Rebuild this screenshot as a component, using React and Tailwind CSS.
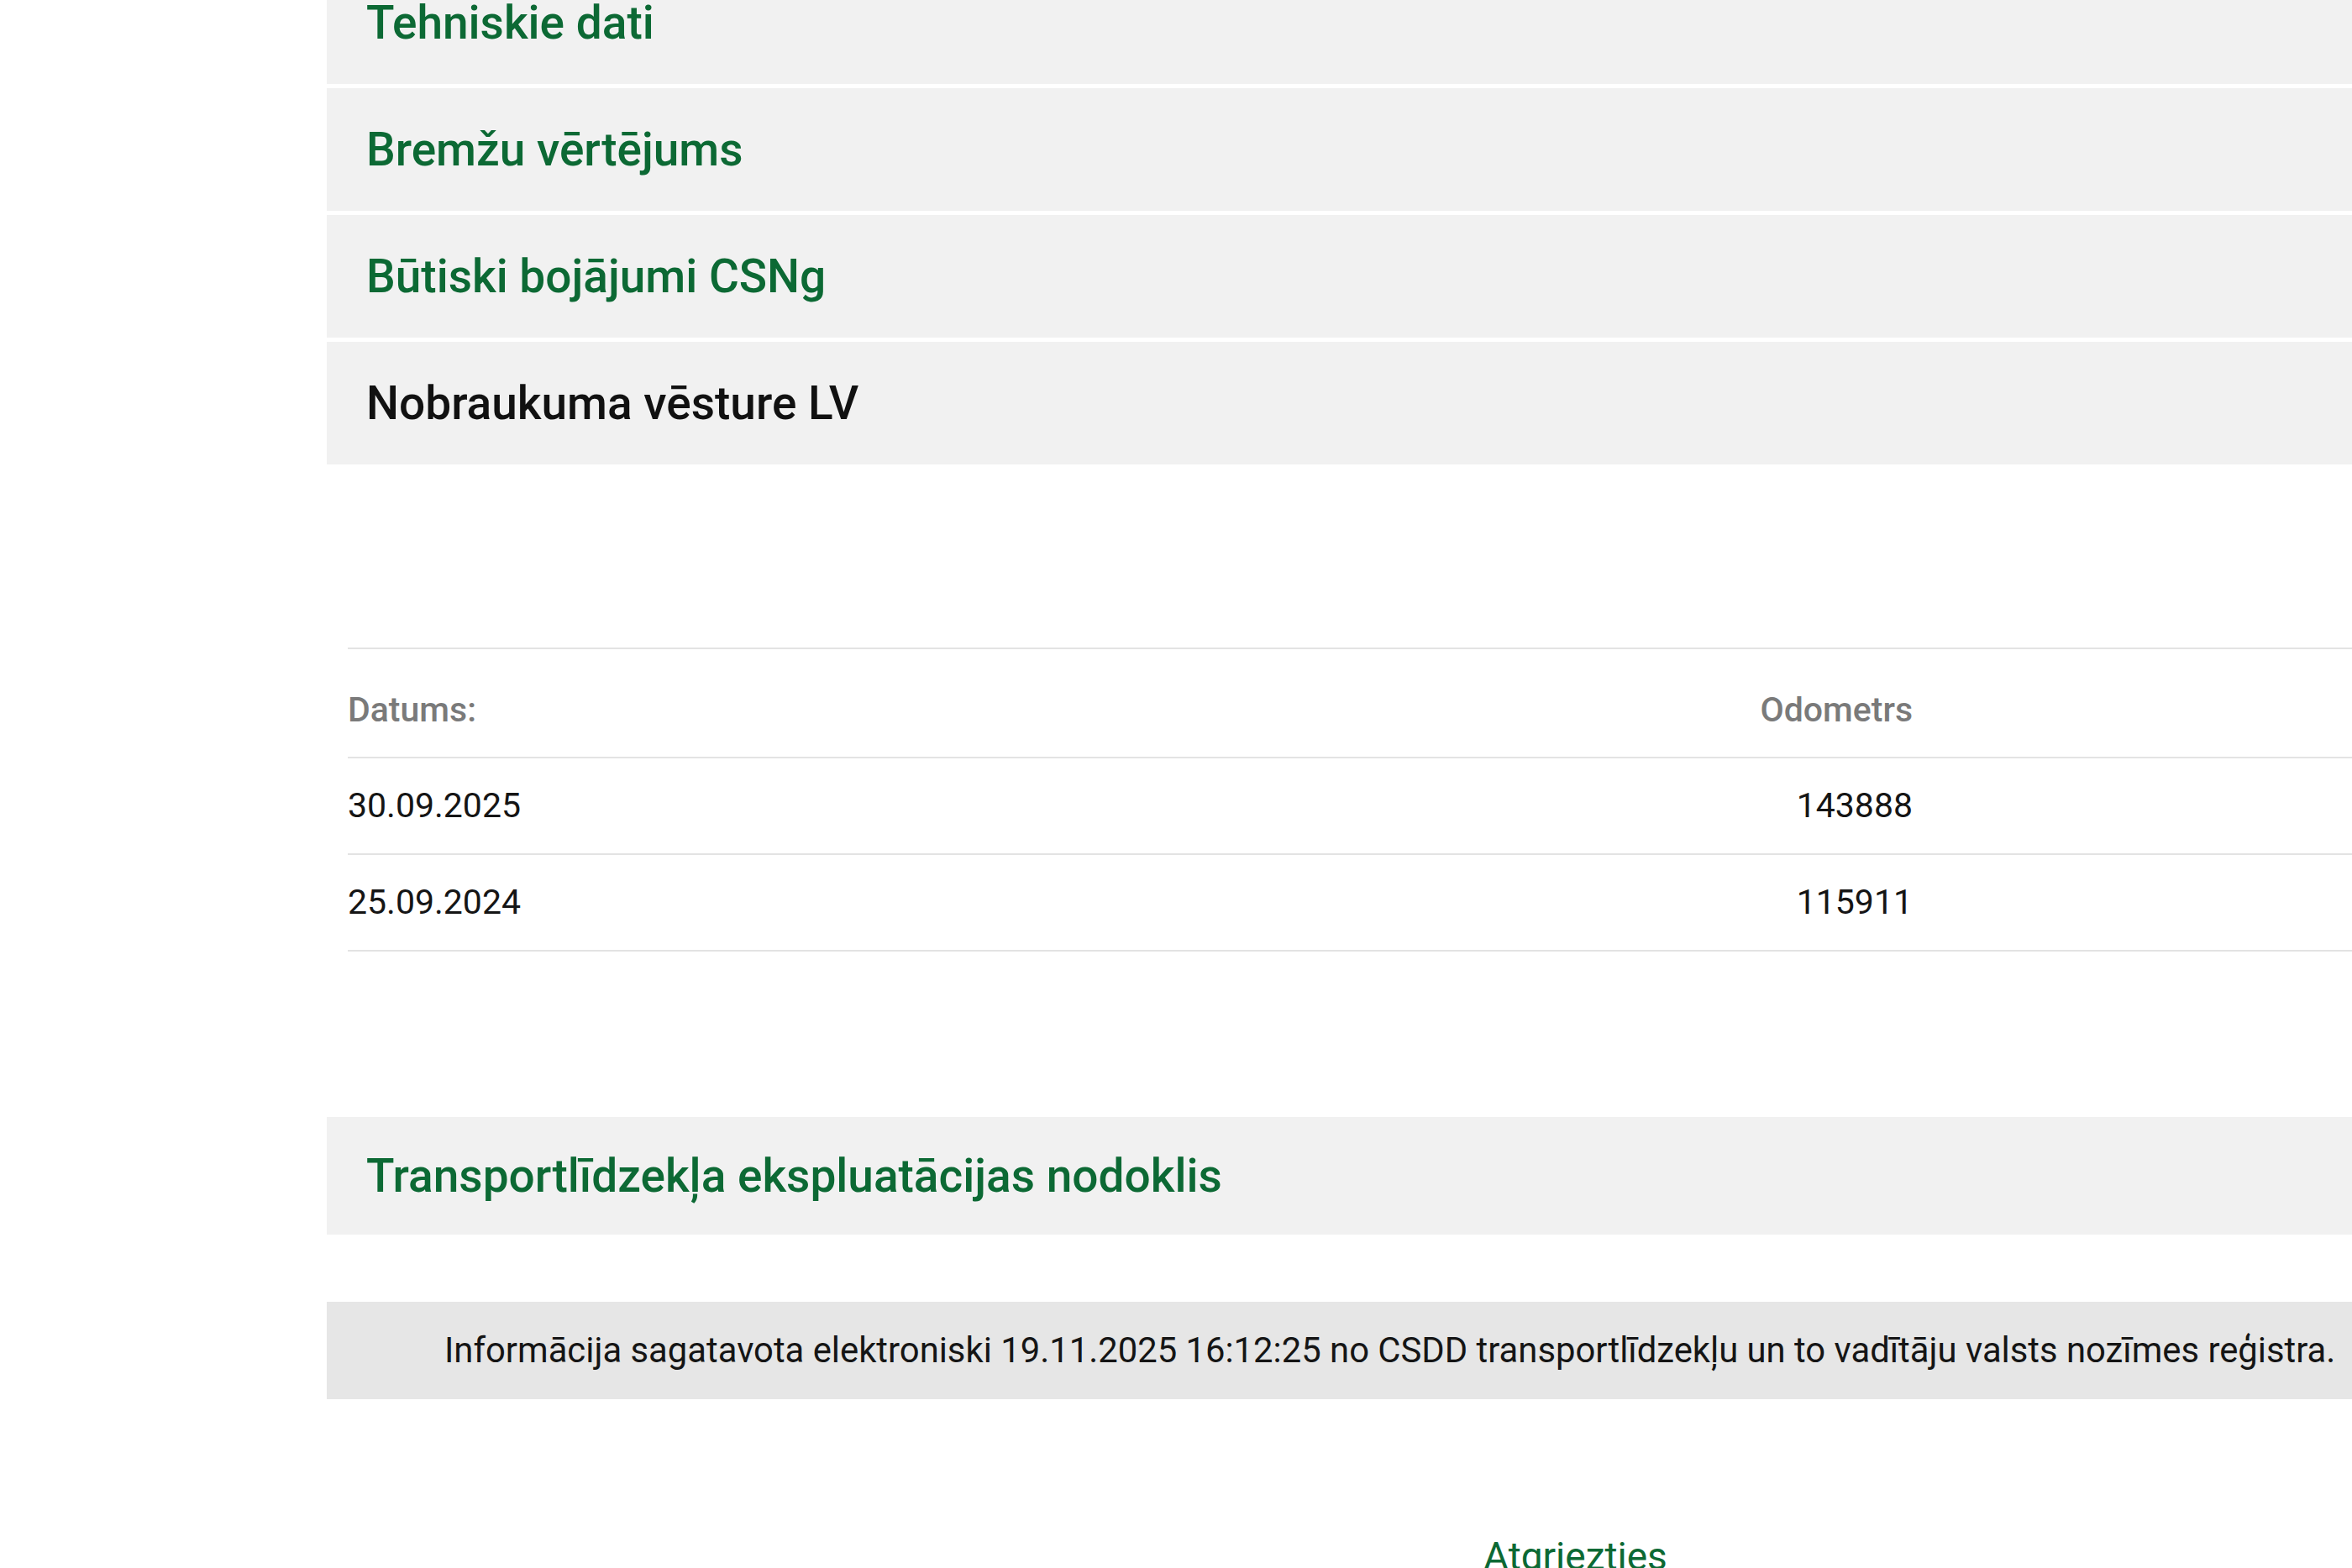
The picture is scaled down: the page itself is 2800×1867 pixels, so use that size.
import React from 'react';

const sections = ['Tehniskie dati', 'Bremžu vērtējums', 'Būtiski bojājumi CSNg'];

const mileage = [
  { date: '30.09.2025', odo: '143888' },
  { date: '25.09.2024', odo: '115911' },
];

const Panel = ({ title, active = false, className = 'h-[146px]' }) => (
  <div className={`flex items-center bg-[#f1f1f1] pl-[47px] ${className}`}>
    <span
      className={`text-[55px] font-medium leading-none ${
        active ? 'text-[#111111]' : 'text-[#0c6934]'
      }`}
    >
      {title}
    </span>
  </div>
);

const App = () => {
  return (
    <div
      className="h-[1867px] w-[2800px] overflow-hidden bg-white"
      style={{ fontFamily: 'Roboto, "Liberation Sans", Arial, sans-serif' }}
    >
      <div className="-mt-[46px] ml-[389px] w-[2600px]">
        {/* Accordion headers */}
        <div className="flex flex-col gap-[5px]">
          {sections.map((title) => (
            <Panel key={title} title={title} />
          ))}
          <Panel title="Nobraukuma vēsture LV" active />
        </div>

        {/* Mileage table */}
        <div className="ml-[25px] mt-[218px] border-t-2 border-[#e3e3e3]">
          <div className="flex h-[130px] items-center border-b-2 border-[#e3e3e3] pt-[18px] text-[41px] font-medium text-[#7a7a7a]">
            <div className="w-[1463px]">Datums:</div>
            <div className="w-[400px] text-right">Odometrs</div>
          </div>
          {mileage.map((row) => (
            <div
              key={row.date}
              className="flex h-[115px] items-center border-b-2 border-[#e3e3e3] text-[41px] text-[#151515]"
            >
              <div className="w-[1463px]">{row.date}</div>
              <div className="w-[400px] text-right">{row.odo}</div>
            </div>
          ))}
        </div>

        <Panel
          title="Transportlīdzekļa ekspluatācijas nodoklis"
          className="mt-[197px] h-[140px]"
        />

        {/* Footer note */}
        <div className="mt-[80px] flex h-[116px] items-center bg-[#e6e6e6] pl-[140px] text-[41.8px] text-[#151515]">
          Informācija sagatavota elektroniski 19.11.2025 16:12:25 no CSDD
          transportlīdzekļu un to vadītāju valsts nozīmes reģistra.
        </div>

        <div className="mt-[164px] pl-[1377px]">
          <a href="#" className="text-[46px] leading-none text-[#0c6934]">
            Atgriezties
          </a>
        </div>
      </div>
    </div>
  );
};

export default App;
